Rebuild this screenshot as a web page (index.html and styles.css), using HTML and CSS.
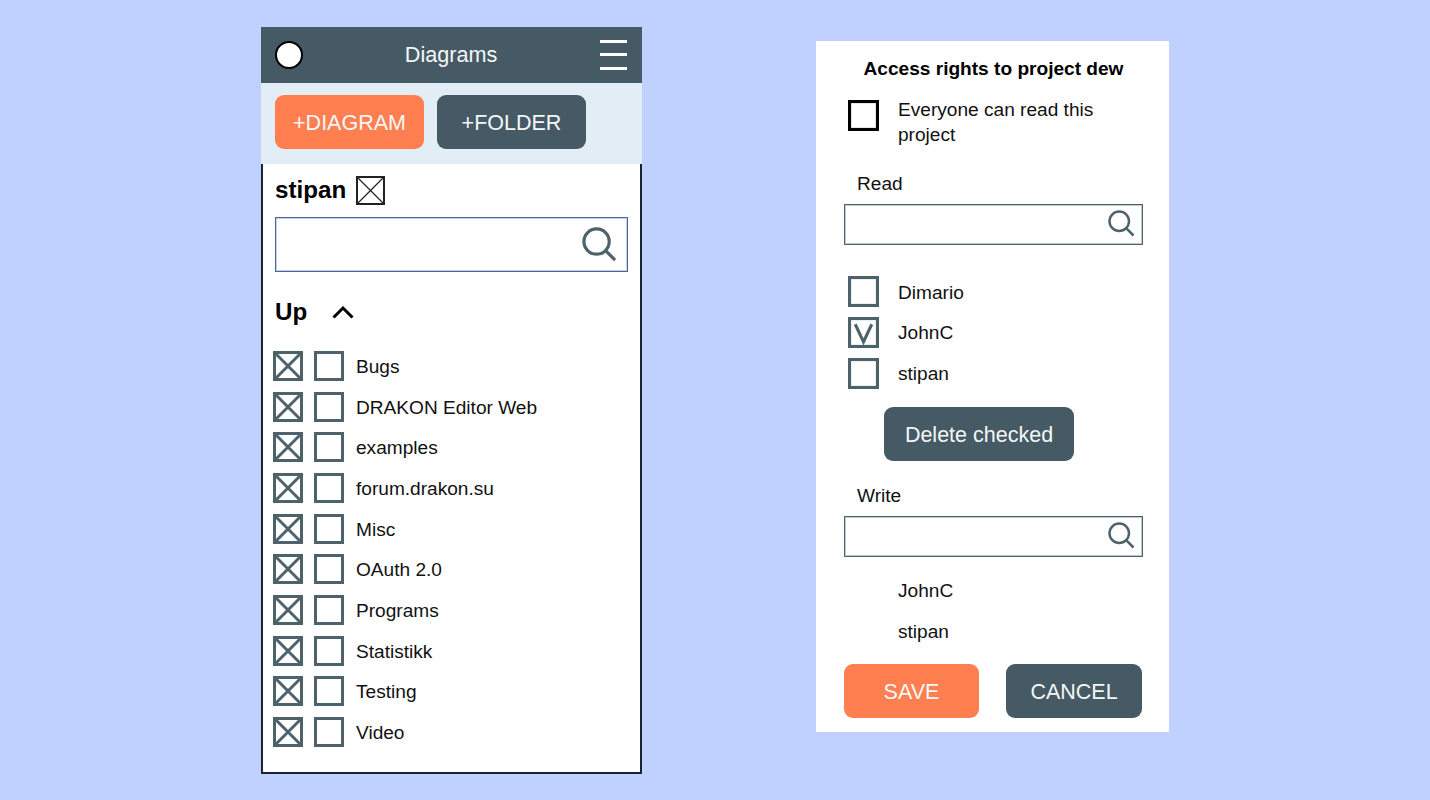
FILE: index.html
```html
<!DOCTYPE html>
<html lang="en">
<head>
<meta charset="utf-8">
<title>Diagrams</title>
<link rel="stylesheet" href="styles.css">
</head>
<body>
<svg class="defs" width="0" height="0" aria-hidden="true">
  <symbol id="crossed" viewBox="0 0 30 30"><rect x="1.5" y="1.5" width="27" height="27" fill="none" stroke="currentColor" stroke-width="3"/><path d="M2 2 28 28M28 2 2 28" fill="none" stroke="currentColor" stroke-width="3"/></symbol>
  <symbol id="empty" viewBox="0 0 30 30"><rect x="1.5" y="1.5" width="27" height="27" fill="none" stroke="currentColor" stroke-width="3"/></symbol>
  <symbol id="search" viewBox="0 0 36 36"><circle cx="15" cy="15" r="13" fill="none" stroke="currentColor" stroke-width="3.3"/><path d="M24.500 24.500 34 34" fill="none" stroke="currentColor" stroke-width="3.3"/></symbol>
</svg>
<main class="stage">
  <section class="phone">
    <header class="topbar">
      <span class="avatar"></span>
      <h1 class="topbar-title">Diagrams</h1>
      <span class="burger"><i></i><i></i><i></i></span>
    </header>
    <div class="toolbar">
      <button class="btn btn-orange btn-wide">+DIAGRAM</button>
      <button class="btn btn-dark btn-wide">+FOLDER</button>
    </div>
    <div class="content">
      <div class="user">
        <span class="user-name">stipan</span>
        <svg class="user-box" viewBox="0 0 29 29"><rect x="1" y="1" width="27" height="27" fill="none" stroke="#222" stroke-width="2"/><path d="M1 1 28 28M28 1 1 28" fill="none" stroke="#222" stroke-width="1.200"/></svg>
      </div>
      <div class="search search-main"><svg class="icon-search-lg"><use href="#search"/></svg></div>
      <div class="up">
        <span class="up-label">Up</span>
        <svg class="chevron" viewBox="0 0 22 14"><path d="M1.500 12.500 11 3 20.500 12.500" fill="none" stroke="#000" stroke-width="3"/></svg>
      </div>
      <ul class="list">
        <li class="row"><svg class="box"><use href="#crossed"/></svg><svg class="box"><use href="#empty"/></svg><span>Bugs</span></li>
        <li class="row"><svg class="box"><use href="#crossed"/></svg><svg class="box"><use href="#empty"/></svg><span>DRAKON Editor Web</span></li>
        <li class="row"><svg class="box"><use href="#crossed"/></svg><svg class="box"><use href="#empty"/></svg><span>examples</span></li>
        <li class="row"><svg class="box"><use href="#crossed"/></svg><svg class="box"><use href="#empty"/></svg><span>forum.drakon.su</span></li>
        <li class="row"><svg class="box"><use href="#crossed"/></svg><svg class="box"><use href="#empty"/></svg><span>Misc</span></li>
        <li class="row"><svg class="box"><use href="#crossed"/></svg><svg class="box"><use href="#empty"/></svg><span>OAuth 2.0</span></li>
        <li class="row"><svg class="box"><use href="#crossed"/></svg><svg class="box"><use href="#empty"/></svg><span>Programs</span></li>
        <li class="row"><svg class="box"><use href="#crossed"/></svg><svg class="box"><use href="#empty"/></svg><span>Statistikk</span></li>
        <li class="row"><svg class="box"><use href="#crossed"/></svg><svg class="box"><use href="#empty"/></svg><span>Testing</span></li>
        <li class="row"><svg class="box"><use href="#crossed"/></svg><svg class="box"><use href="#empty"/></svg><span>Video</span></li>
      </ul>
    </div>
  </section>
  <section class="dialog">
    <h2 class="dialog-title">Access rights to project dew</h2>
    <div class="public">
      <svg class="check check-black"><use href="#empty"/></svg>
      <span class="public-text">Everyone can read this project</span>
    </div>
    <div class="field-label field-read">Read</div>
    <div class="search search-small"><svg class="icon-search-sm"><use href="#search"/></svg></div>
    <ul class="people people-read">
      <li class="person"><svg class="check"><use href="#empty"/></svg><span>Dimario</span></li>
      <li class="person"><svg class="check" viewBox="0 0 30 30"><rect x="1.500" y="1.500" width="27" height="27" fill="none" stroke="currentColor" stroke-width="3"/><path d="M7 7 15 24 23 7" fill="none" stroke="currentColor" stroke-width="3"/></svg><span>JohnC</span></li>
      <li class="person"><svg class="check"><use href="#empty"/></svg><span>stipan</span></li>
    </ul>
    <button class="btn btn-dark btn-delete">Delete checked</button>
    <div class="field-label field-write">Write</div>
    <div class="search search-small"><svg class="icon-search-sm"><use href="#search"/></svg></div>
    <ul class="people people-write">
      <li class="person person-plain"><span>JohnC</span></li>
      <li class="person person-plain"><span>stipan</span></li>
    </ul>
    <div class="actions">
      <button class="btn btn-orange">SAVE</button>
      <button class="btn btn-dark">CANCEL</button>
    </div>
  </section>
</main>
</body>
</html>
```
FILE: styles.css
```css
* { box-sizing: border-box; }
html, body { margin: 0; height: 100%; }
body {
  background: #c0d1ff;
  font-family: "Liberation Sans", Arial, sans-serif;
  font-size: 19.100px;
  color: #111;
  overflow: hidden;
}
.defs { position: absolute; }
ul { list-style: none; margin: 0; padding: 0; }
h1, h2 { margin: 0; font: inherit; }
.stage { display: flex; align-items: flex-start; gap: 174px; padding: 27px 0 0 261px; }

.phone { width: 381px; height: 747px; display: flex; flex-direction: column; }
.topbar {
  height: 56px; flex: none; display: flex; align-items: center; justify-content: space-between;
  padding: 0 14px; background: #455a64; color: #f5f7f8;
}
.avatar { width: 28px; height: 28px; border-radius: 50%; background: #fff; border: 2px solid #000; }
.topbar-title { font-size: 21.600px; margin-left: -1px; }
.burger { width: 27px; height: 30px; display: flex; flex-direction: column; justify-content: space-between; margin: -1px 1px 0 0; }
.burger i { display: block; height: 3px; background: #fff; }
.toolbar { height: 81px; flex: none; display: flex; gap: 13px; padding: 12px 14px; background: #e3edf6; }
.btn {
  height: 54px; border: 0; border-radius: 9px; padding: 2px 0 0; color: #f5f7f8;
  font-family: inherit; font-size: 21.500px;
}
.btn-orange { background: #ff7f50; }
.btn-dark { background: #455a64; }
.btn-wide { width: 149px; }

.content {
  flex: 1; background: #fff; padding: 11px 12px 0 12px;
  border: 2px solid #1a2233; border-top: 0;
}
.user { display: flex; align-items: center; gap: 10px; height: 30px; }
.user-name { font-size: 24.200px; font-weight: 700; color: #000; }
.user-box { width: 29px; height: 29px; margin-top: 1px; }
.search { background: #fff; display: flex; align-items: center; justify-content: flex-end; }
.search-main { height: 55px; margin-top: 12px; border: 1px solid #4a64a0; box-shadow: inset 0 0 0 1px rgba(74, 100, 160, 0.3); padding-right: 10px; }
.search-small { width: 299px; height: 41px; border: 1px solid #4e626c; box-shadow: inset 0 0 0 1px rgba(78, 98, 108, 0.35); padding-right: 7px; }
.icon-search-lg { width: 35px; height: 35px; color: #4e626c; }
.icon-search-sm { width: 27px; height: 27px; color: #4e626c; margin-bottom: 2px; }
.up { display: flex; align-items: center; height: 40px; margin-top: 20px; gap: 25px; }
.up-label { font-size: 24.200px; font-weight: 700; color: #000; }
.chevron { width: 22px; height: 14px; }
.list { margin-top: 13.700px; margin-left: -2px; }
.row { height: 40.670px; display: flex; align-items: center; gap: 11px; color: #111; }
.box { width: 30px; height: 30px; color: #4e626c; flex: none; }
.row span { margin-left: 1px; padding-top: 2px; }

.dialog { width: 353px; height: 691px; margin-top: 14px; padding: 0 27px 0 28px; background: #fff; }
.dialog-title { height: 54px; line-height: 56px; text-align: center; font-weight: 700; color: #000; margin: 0 -20px; padding-left: 1px; }
.public { display: flex; align-items: flex-start; gap: 19px; padding-left: 4px; }
.public-text { width: 220px; line-height: 24.700px; margin-top: 3.200px; }
.check { width: 31px; height: 31px; flex: none; color: #4e626c; }
.check-black { color: #000; margin-top: 5px; }
.field-label { height: 24px; line-height: 26px; padding-left: 13px; }
.field-read { margin-top: 23.800px; }
.field-write { margin-top: 22px; }
.search-small { margin-top: 9px; }
.people-read { margin-top: 26px; }
.people-write { margin-top: 12.700px; }
.person { height: 40.670px; display: flex; align-items: center; gap: 19px; padding-left: 4px; }
.person span { padding-top: 2px; }
.person-plain { padding-left: 54px; }
.btn-delete { display: block; width: 190px; margin: 14px 0 0 40px; }
.actions { display: grid; grid-template-columns: 135px 136px; column-gap: 27px; margin-top: 13px; }
```
